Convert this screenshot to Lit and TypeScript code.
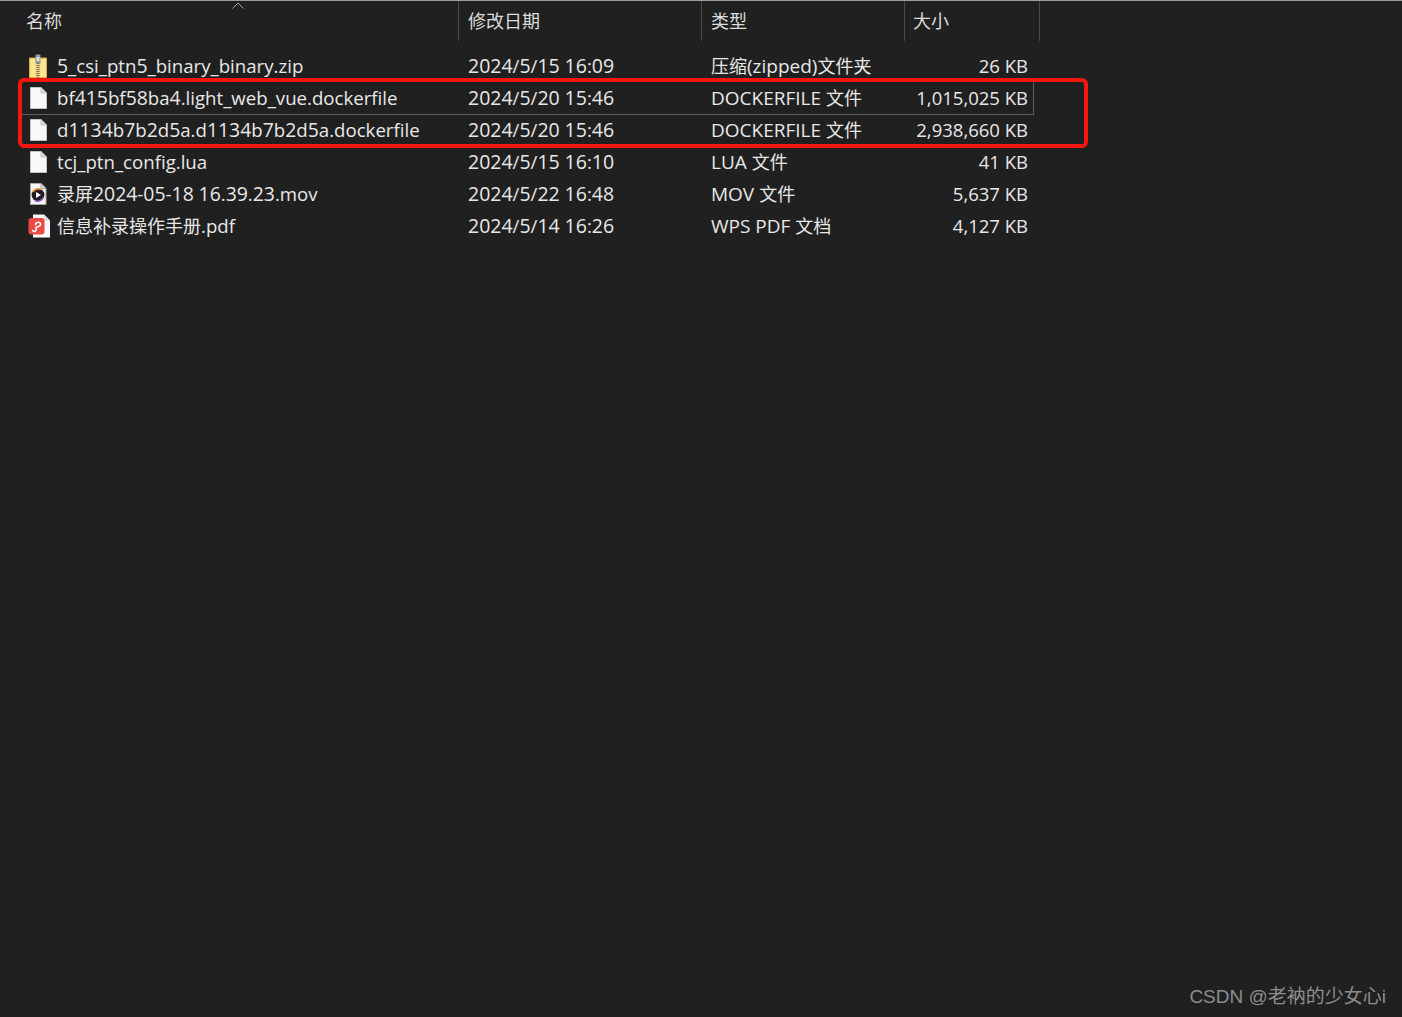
import { LitElement, html, css, svg } from "lit";
import { customElement } from "lit/decorators.js";

const fileIcon = svg`<svg width="20" height="24" viewBox="0 0 20 24"><path d="M2.5 1.5H13L18.5 7V22.5H2.5Z" fill="#f8f8f8" stroke="#c4c4c4"/><path d="M13 1.5V7H18.5" fill="#dcdcdc" stroke="#c4c4c4"/></svg>`;
const zipIcon = svg`<svg width="20" height="24" viewBox="0 0 20 24"><path d="M1.5 4H18.5V23.5H1.5Z" fill="#f7d774" stroke="#d9ae44"/><path d="M12.5 5H18V23H12.5Z" fill="#fbe596"/><path d="M2.5 5H7V23H2.5Z" fill="#fbe596"/><rect x="7.5" y="0.5" width="5" height="9" rx="1" fill="#9a9a9a"/><rect x="8.7" y="3" width="2.6" height="4" fill="#e6e6e6"/><path d="M10 9V23.5" stroke="#6f6f6f" stroke-width="3" stroke-dasharray="1 1"/></svg>`;
const movIcon = svg`<svg width="20" height="24" viewBox="0 0 20 24"><path d="M2.5 1.5H13L18 6.5V22.5H2.5Z" fill="#f4f4f4" stroke="#a8a8a8"/><path d="M13 1.5V6.5H18" fill="#dcdcdc" stroke="#a8a8a8"/><circle cx="10" cy="13" r="6.4" fill="#231b22"/><path d="M5 10A6.4 6.4 0 0 1 13 7.6" stroke="#e8872f" stroke-width="1.5" fill="none"/><path d="M15.5 15A6.4 6.4 0 0 1 7 18.6" stroke="#9b56c9" stroke-width="1.5" fill="none"/><path d="M8 10L13 13L8 16Z" fill="#fff"/></svg>`;
const pdfIcon = svg`<svg width="24" height="24" viewBox="0 0 24 24"><path d="M5 0.5H16L22 6.5V23.5H5Z" fill="#fbfbfb"/><path d="M16 0.5V6.5H22" fill="#dcdcdc"/><rect x="0.5" y="4" width="16" height="16.5" rx="3" fill="#ec4a45"/><path d="M4.5 16.5C6.5 18.5 9 17 8 14.5C7 12 12.5 13.5 12.5 10.5C12.5 7.5 8 7.5 7.5 10.5" fill="none" stroke="#fff" stroke-width="1.6" stroke-linecap="round"/></svg>`;

const rows = [
  { icon: zipIcon, name: "5_csi_ptn5_binary_binary.zip", date: "2024/5/15 16:09", type: "压缩(zipped)文件夹", size: "26 KB" },
  { icon: fileIcon, name: "bf415bf58ba4.light_web_vue.dockerfile", date: "2024/5/20 15:46", type: "DOCKERFILE 文件", size: "1,015,025 KB", hot: true },
  { icon: fileIcon, name: "d1134b7b2d5a.d1134b7b2d5a.dockerfile", date: "2024/5/20 15:46", type: "DOCKERFILE 文件", size: "2,938,660 KB" },
  { icon: fileIcon, name: "tcj_ptn_config.lua", date: "2024/5/15 16:10", type: "LUA 文件", size: "41 KB" },
  { icon: movIcon, name: "录屏2024-05-18 16.39.23.mov", date: "2024/5/22 16:48", type: "MOV 文件", size: "5,637 KB" },
  { icon: pdfIcon, name: "信息补录操作手册.pdf", date: "2024/5/14 16:26", type: "WPS PDF 文档", size: "4,127 KB" },
];

/** The original's CJK glyphs are smaller than its Latin ones and its digits are wider, so runs get their own size. */
function runs(text: string) {
  return text.match(/[\u4e00-\u9fff]+|[0-9]+|[^\u4e00-\u9fff0-9]+/g)!.map((part) => {
    if (/^[\u4e00-\u9fff]/.test(part)) return html`<span class="cjk">${part}</span>`;
    if (/^[0-9]/.test(part)) return html`<span class="dig">${part}</span>`;
    return part;
  });
}

@customElement("app-root")
export class AppRoot extends LitElement {
  static styles = css`
    :host {
      display: block;
      position: relative;
      width: 1402px;
      height: 1017px;
      overflow: hidden;
      background: #202020;
      color: #e8e8e8;
      font-family: "Open Sans", "Noto Sans CJK SC", sans-serif;
      font-size: 18.65px;
    }
    .cjk { font-size: 18px; }
    .dig { font-size: 19.4px; }
    .top { height: 1px; background: #9a9a9a; }
    .head {
      display: grid;
      grid-template-columns: 459px 243px 203px 135px;
      height: 40px;
      color: #dcdcdc;
      font-size: 18px;
    }
    .hc {
      display: flex;
      align-items: center;
      padding-left: 9px;
      border-right: 1px solid #4a4a4a;
      position: relative;
      padding-bottom: 2px;
      box-sizing: border-box;
    }
    .hc:first-child { padding-left: 26px; }
    .hc:last-child { padding-left: 8px; }
    .caret { position: absolute; left: 232px; top: 1px; }
    .list { display: flex; flex-direction: column; margin-top: 9px; margin-left: 22px; width: 1012px; }
    .row {
      display: grid;
      grid-template-columns: 436px 243px 205px 128px;
      height: 32px;
      align-items: center;
      white-space: nowrap;
      line-height: 32px;
      box-sizing: border-box;
      position: relative;
    }
    .hot {
      box-shadow: 0 1px 0 #5f5f5f, inset -1px 0 0 #5f5f5f;
    }
    .name { display: flex; align-items: center; padding-left: 6px; }
    .ico { width: 29px; height: 24px; display: flex; flex: none; }
    .date { padding-left: 10px; }
    .date .dig { font-size: 19.5px; }
    .type { padding-left: 10px; font-size: 19px; }
    .size { text-align: right; padding-right: 6px; font-size: 18.5px; }
    .size .dig { font-size: 18.5px; }
    .mark {
      position: absolute;
      left: 18px;
      top: 78px;
      width: 1070px;
      height: 70px;
      box-sizing: border-box;
      border: 4px solid #f5170f;
      border-radius: 6px;
      pointer-events: none;
    }
    .wm {
      position: absolute;
      right: 16px;
      bottom: 8px;
      color: #8d8d8d;
      font-family: "Liberation Sans", "Noto Sans CJK SC", sans-serif;
      font-size: 19px;
      line-height: 24px;
    }
  `;

  render() {
    return html`
      <div class="top"></div>
      <div class="head">
        <div class="hc">名称
          <svg class="caret" width="12" height="7" viewBox="0 0 12 7"><path d="M0.5 6.5L6 1L11.5 6.5" fill="none" stroke="#a8a8a8"/></svg>
        </div>
        <div class="hc">修改日期</div>
        <div class="hc">类型</div>
        <div class="hc">大小</div>
      </div>
      <div class="list">
        ${rows.map(
          (r) => html`<div class="row ${r.hot ? "hot" : ""}">
            <div class="name"><span class="ico">${r.icon}</span><span>${runs(r.name)}</span></div>
            <div class="date">${runs(r.date)}</div>
            <div class="type">${runs(r.type)}</div>
            <div class="size">${runs(r.size)}</div>
          </div>`
        )}
      </div>
      <div class="mark"></div>
      <div class="wm">CSDN @老衲的少女心i</div>
    `;
  }
}
